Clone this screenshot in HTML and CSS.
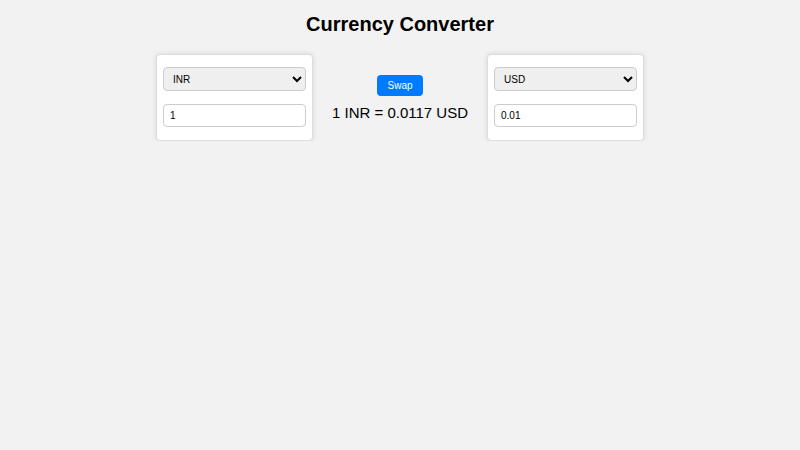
FILE: index.html
```html
<!DOCTYPE html>
<html>

  <head>
    <meta charset="utf-8">
    <title>Currency Converter</title>
    <link rel="stylesheet" href="styles.css">
  </head>

  <body>
    <h1>Currency Converter</h1>
    <div id="converter">
      <div class="box">
        <select class="currency">
          <option selected>INR</option>
          <option>USD</option>
          <option>EUR</option>
        </select>
        <input class="amount" type="text" value="1">
      </div>
      <div class="middle">
        <button class="swap">Swap</button>
        <p class="rate">1 INR = 0.0117 USD</p>
      </div>
      <div class="box">
        <select class="currency">
          <option>INR</option>
          <option selected>USD</option>
          <option>EUR</option>
        </select>
        <input class="amount" type="text" value="0.01">
      </div>
    </div>
  </body>

</html>
```

FILE: styles.css
```css
body {
  margin: 0;
  background: #f2f2f2;
  font-family: "Liberation Sans", Arial, sans-serif;
  color: #000;
}

h1 {
  font-size: 20px;
  text-align: center;
  margin: 0;
  padding: 13px 0 18px;
}

#converter {
  display: flex;
  justify-content: center;
  align-items: center;
  gap: 20px;
}

.box {
  display: flex;
  flex-direction: column;
  gap: 13px;
  width: 143px;
  padding: 12px 6px 13px;
  background: #fff;
  border: 1px solid #ddd;
  border-radius: 4px;
  box-shadow: 0 0 5px rgba(0, 0, 0, 0.12);
}

.currency {
  width: 100%;
  height: 24px;
  padding: 0 5px;
  font-family: "Liberation Sans", Arial, sans-serif;
  font-size: 10px;
  background: #efefef;
  border: 1px solid #ccc;
  border-radius: 4px;
}

.amount {
  box-sizing: border-box;
  width: 100%;
  height: 23px;
  padding: 0 6px;
  font-family: "Liberation Sans", Arial, sans-serif;
  font-size: 10px;
  border: 1px solid #ccc;
  border-radius: 4px;
}

.middle {
  display: flex;
  flex-direction: column;
  align-items: center;
  width: 134px;
}

.swap {
  height: 21px;
  padding: 0 10px;
  font-family: "Liberation Sans", Arial, sans-serif;
  font-size: 10px;
  color: #fff;
  background: #007bff;
  border: none;
  border-radius: 4px;
}

.rate {
  margin: 8px 0 0;
  font-size: 15px;
  white-space: nowrap;
}
```
